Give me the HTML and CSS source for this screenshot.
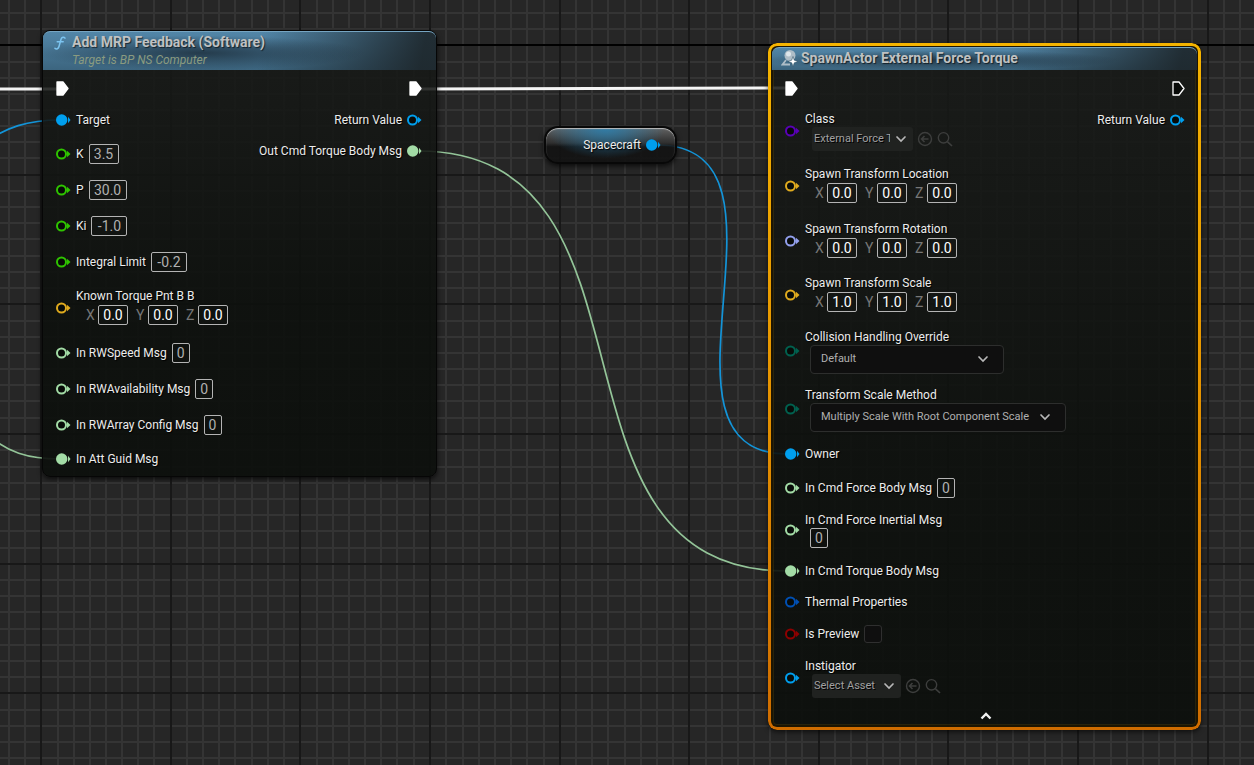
FILE: index.html
```html
<!DOCTYPE html>
<html lang="en">
<head>
<meta charset="utf-8">
<title>Blueprint Graph</title>
<link rel="stylesheet" href="styles.css">
</head>
<body>
<svg class="defs" aria-hidden="true">
  <symbol id="exec" viewBox="0 0 13 15"><path d="M1 1H7l5 6.500L7 14H1Z" stroke-width="1.300" stroke="#fff" stroke-linejoin="round"/></symbol>
  <symbol id="pin" viewBox="0 0 15 12"><circle cx="5.500" cy="6" r="4.500" fill="#080b08" stroke="currentColor" stroke-width="2"/><path d="M11 2.800 14.500 6 11 9.200Z" fill="currentColor"/></symbol>
  <symbol id="pin-on" viewBox="0 0 15 12"><circle cx="5.700" cy="6" r="5.700" fill="currentColor"/><path d="M12 2.800 14.500 6 12 9.200Z" fill="currentColor"/></symbol>
  <symbol id="chev" viewBox="0 0 12 8"><path d="M2 2l4 4 4-4" fill="none" stroke="currentColor" stroke-width="1.700" stroke-linecap="round"/></symbol>
  <symbol id="use" viewBox="0 0 16 16"><circle cx="8" cy="8" r="6.500" fill="none" stroke="currentColor" stroke-width="1.400"/><path d="M11.500 8H4.500M7.500 5l-3 3 3 3" fill="none" stroke="currentColor" stroke-width="1.600"/></symbol>
  <symbol id="find" viewBox="0 0 16 16"><circle cx="6.500" cy="6.800" r="5.200" fill="none" stroke="currentColor" stroke-width="1.400"/><path d="M10.500 10.800 15 15" stroke="currentColor" stroke-width="1.700"/></symbol>
</svg>
<main class="graph">
  <svg class="layer" aria-hidden="true">
    <defs>
      <pattern id="grid" width="648" height="648" patternUnits="userSpaceOnUse" patternTransform="translate(41 45)">
        <g fill="none" stroke-width="2">
          <path id="minor" stroke="#343434" d="M17 0v648M33 0v648M49 0v648M65 0v648M81 0v648M97 0v648M113 0v648M146 0v648M162 0v648M178 0v648M194 0v648M211 0v648M227 0v648M243 0v648M276 0v648M292 0v648M308 0v648M324 0v648M340 0v648M356 0v648M373 0v648M405 0v648M422 0v648M438 0v648M454 0v648M470 0v648M486 0v648M503 0v648M535 0v648M551 0v648M567 0v648M584 0v648M600 0v648M616 0v648M632 0v648"/>
          <use href="#minor" transform="matrix(0 1 1 0 0 0)"/>
          <path id="major" stroke="#181818" d="M0 0v648M130 0v648M259 0v648M389 0v648M519 0v648M648 0v648"/>
          <use href="#major" transform="matrix(0 1 1 0 0 0)"/>
        </g>
      </pattern>
    </defs>
    <rect width="100%" height="100%" fill="url(#grid)"/>
    <path d="M0 45H4000" stroke="#000" stroke-width="2"/>
    <g fill="none">
      <path d="M0 89H60M418 89L788 88" stroke="#f4f4f4" stroke-width="3"/>
      <g stroke="#1394d8" stroke-width="1.700">
        <path d="M-20 147C5 126 30 120 60 120"/>
        <path d="M657 145C814 145 634 454 787 454"/>
      </g>
      <g stroke="#93c498" stroke-width="1.700">
        <path d="M-15 431C5 453 30 459 60 459"/>
        <path d="M418 151C678 151 527 571 787 571"/>
      </g>
    </g>
  </svg>

  <section class="node feedback">
    <header class="head">
      <svg class="fn" viewBox="0 0 12 14"><path d="M11 2.200C10 .6 7.700.8 7.100 3L5 10.500C4.400 12.800 2.500 13.500 1 12.300M3.200 5.800h6" fill="none" stroke="#7cc4f0" stroke-width="1.500" stroke-linecap="round"/></svg>
      <div><h2>Add MRP Feedback (Software)</h2><p>Target is BP NS Computer</p></div>
    </header>
    <div class="body">
      <div class="ins">
        <div class="row h30"><svg class="exec on"><use href="#exec"/></svg></div>
        <div class="row h33 blue"><svg class="pin"><use href="#pin-on"/></svg><span>Target</span></div>
        <div class="row h36 green"><svg class="pin"><use href="#pin"/></svg><label for="k">K</label><input id="k" class="w3" value="3.5"></div>
        <div class="row h36 green"><svg class="pin"><use href="#pin"/></svg><label for="p">P</label><input id="p" class="w4" value="30.0"></div>
        <div class="row h36 green"><svg class="pin"><use href="#pin"/></svg><label for="ki">Ki</label><input id="ki" class="neg" value="-1.0"></div>
        <div class="row h36 green"><svg class="pin"><use href="#pin"/></svg><label for="il">Integral Limit</label><input id="il" class="neg" value="-0.2"></div>
        <div class="row h55 gold"><svg class="pin"><use href="#pin"/></svg>
          <div class="stack lift"><span class="name">Known Torque Pnt B B</span>
            <div class="vec"><label for="tx">X</label><input id="tx" value="0.0"><label for="ty">Y</label><input id="ty" value="0.0"><label for="tz">Z</label><input id="tz" value="0.0"></div></div></div>
        <div class="row h36 mint"><svg class="pin"><use href="#pin"/></svg><label for="rs">In RWSpeed Msg</label><input id="rs" class="w1" value="0"></div>
        <div class="row h36 mint"><svg class="pin"><use href="#pin"/></svg><label for="ra">In RWAvailability Msg</label><input id="ra" class="w1" value="0"></div>
        <div class="row h36 mint"><svg class="pin"><use href="#pin"/></svg><label for="rc">In RWArray Config Msg</label><input id="rc" class="w1" value="0"></div>
        <div class="row h32 mint"><svg class="pin"><use href="#pin-on"/></svg><span>In Att Guid Msg</span></div>
      </div>
      <div class="outs">
        <div class="row h30"><svg class="exec on"><use href="#exec"/></svg></div>
        <div class="row h33 blue"><span>Return Value</span><svg class="pin"><use href="#pin"/></svg></div>
        <div class="row h30 mint"><span>Out Cmd Torque Body Msg</span><svg class="pin"><use href="#pin-on"/></svg></div>
      </div>
    </div>
  </section>

  <section class="variable blue"><span>Spacecraft</span><svg class="pin"><use href="#pin-on"/></svg></section>

  <section class="node spawn">
    <header class="head">
      <svg class="actor" viewBox="0 0 18 18"><circle cx="9" cy="6.500" r="5.500" fill="#aebdc7"/><circle cx="7.500" cy="5" r="2.500" fill="#dde6eb"/><path d="M5 11 1.500 15.500H9" fill="none" stroke="#aebdc7" stroke-width="1.800"/><path d="M12 7.500l1.300 3.700L17 12.500l-3.700 1.300L12 17.500l-1.300-3.700L7 12.500l3.700-1.300Z" fill="#fff" stroke="#33556a" stroke-width=".6"/></svg>
      <h2>SpawnActor External Force Torque</h2>
    </header>
    <div class="body">
      <div class="ins">
        <div class="row h30"><svg class="exec on"><use href="#exec"/></svg></div>
        <div class="row h56 purple"><svg class="pin"><use href="#pin"/></svg>
          <div class="stack tight"><label class="name" for="cl">Class</label>
            <div class="asset"><span class="pick class"><select id="cl"><option>External Force Torque</option></select><svg><use href="#chev"/></svg></span><button aria-label="Use selected"><svg><use href="#use"/></svg></button><button aria-label="Browse"><svg><use href="#find"/></svg></button></div></div></div>
        <div class="row h54 gold"><svg class="pin"><use href="#pin"/></svg>
          <div class="stack lift"><span class="name">Spawn Transform Location</span>
            <div class="vec"><label for="lx">X</label><input id="lx" value="0.0"><label for="ly">Y</label><input id="ly" value="0.0"><label for="lz">Z</label><input id="lz" value="0.0"></div></div></div>
        <div class="row h55 lilac"><svg class="pin"><use href="#pin"/></svg>
          <div class="stack lift"><span class="name">Spawn Transform Rotation</span>
            <div class="vec"><label for="rx">X</label><input id="rx" value="0.0"><label for="ry">Y</label><input id="ry" value="0.0"><label for="rz">Z</label><input id="rz" value="0.0"></div></div></div>
        <div class="row h54 gold"><svg class="pin"><use href="#pin"/></svg>
          <div class="stack lift"><span class="name">Spawn Transform Scale</span>
            <div class="vec"><label for="sx">X</label><input id="sx" value="1.0"><label for="sy">Y</label><input id="sy" value="1.0"><label for="sz">Z</label><input id="sz" value="1.0"></div></div></div>
        <div class="row h58 teal"><svg class="pin"><use href="#pin"/></svg>
          <div class="stack tight"><label class="name" for="co">Collision Handling Override</label>
            <span class="combo short"><select id="co"><option>Default</option></select><svg><use href="#chev"/></svg></span></div></div>
        <div class="row h58 teal"><svg class="pin"><use href="#pin"/></svg>
          <div class="stack tight"><label class="name" for="sm">Transform Scale Method</label>
            <span class="combo long"><select id="sm"><option>Multiply Scale With Root Component Scale</option></select><svg><use href="#chev"/></svg></span></div></div>
        <div class="row h32 blue"><svg class="pin"><use href="#pin-on"/></svg><span>Owner</span></div>
        <div class="row h36 mint"><svg class="pin"><use href="#pin"/></svg><label for="fb">In Cmd Force Body Msg</label><input id="fb" class="w1" value="0"></div>
        <div class="row h48 mint"><svg class="pin"><use href="#pin"/></svg>
          <div class="stack tight"><label class="name" for="fi">In Cmd Force Inertial Msg</label><input id="fi" class="w1 under" value="0"></div></div>
        <div class="row h33 mint"><svg class="pin"><use href="#pin-on"/></svg><span>In Cmd Torque Body Msg</span></div>
        <div class="row h30 navy"><svg class="pin"><use href="#pin"/></svg><span>Thermal Properties</span></div>
        <div class="row h33 red"><svg class="pin"><use href="#pin"/></svg><label for="ip">Is Preview</label><input id="ip" type="checkbox"></div>
        <div class="row h55 blue"><svg class="pin"><use href="#pin"/></svg>
          <div class="stack tight"><label class="name" for="in">Instigator</label>
            <div class="asset"><span class="pick inst"><select id="in"><option>Select Asset</option></select><svg><use href="#chev"/></svg></span><button aria-label="Use selected"><svg><use href="#use"/></svg></button><button aria-label="Browse"><svg><use href="#find"/></svg></button></div></div></div>
      </div>
      <div class="outs">
        <div class="row h30"><svg class="exec"><use href="#exec"/></svg></div>
        <div class="row h33 blue"><span>Return Value</span><svg class="pin"><use href="#pin"/></svg></div>
      </div>
    </div>
    <button class="fold" aria-label="Collapse"><svg viewBox="0 0 12 8"><path d="M1.500 6.500 6 2l4.500 4.500" fill="none" stroke="#f2f2f2" stroke-width="2.400"/></svg></button>
  </section>
</main>
</body>
</html>
```
FILE: styles.css
```css
* { box-sizing: border-box; }
body { margin: 0; background: #262626; color: #ececec; font: 12px/16px Roboto, "Liberation Sans", sans-serif; }
.defs { position: absolute; width: 0; height: 0; }
.graph { position: relative; min-height: 100vh; overflow: hidden; }
.layer { position: absolute; inset: 0; width: 100%; height: 100%; }
h2, p { margin: 0; }
svg { display: block; flex: none; }
input, select, button { font: inherit; color: inherit; margin: 0; padding: 0; border: 0; background: none; appearance: none; }

.node { position: absolute; background: linear-gradient(rgba(24, 26, 24, .87), rgba(13, 16, 13, .9) 60%, rgba(12, 15, 12, .92)); }
.feedback { left: 42px; top: 30px; width: 395px; padding-bottom: 1px; border: 1px solid #060606; border-radius: 8px; box-shadow: 0 2px 5px rgba(0, 0, 0, .7); }
.spawn { left: 768px; top: 43px; width: 433px; padding: 4px 4px 2px; border-radius: 9px; box-shadow: 0 2px 5px rgba(0, 0, 0, .6), inset 0 0 0 5px rgba(25, 18, 0, .8), inset 0 0 0 6px rgba(90, 70, 10, .35); }
.spawn::before { content: ""; position: absolute; inset: 0; padding: 3px; border-radius: 9px; background: linear-gradient(#f5b400, #e69400 50%, #cf6c00); mask: linear-gradient(#000 0 0) content-box exclude, linear-gradient(#000 0 0); pointer-events: none; }

.head { display: flex; color: #bfc1c2; border-radius: 7px 7px 0 0; border-top: 1px solid #76a5c2;
  background: radial-gradient(ellipse 42% 46% at 40% 55%, rgba(25, 40, 52, .75), transparent), linear-gradient(100deg, transparent 55%, rgba(28, 36, 40, .9) 96%), linear-gradient(#5286a8, #3c657f); }
h2 { font-size: 14px; line-height: 20px; font-weight: 700; text-shadow: 1px 1px 1px rgba(0, 0, 0, .6); }
.head p { font-style: italic; color: #8a9b80; }
.feedback .head { height: 39px; padding-left: 11px; gap: 6px; }
.fn { width: 12px; height: 14px; margin-top: 4px; }
.spawn .head { height: 23px; padding-left: 9px; gap: 2px; }
.actor { width: 18px; height: 18px; margin-top: 1px; }

.body { display: flex; justify-content: space-between; padding: 3px 14px 0 13px; }
.spawn .body { padding-right: 12px; }
.ins, .outs { display: flex; flex-direction: column; }
.outs { align-items: flex-end; }
.row { display: flex; align-items: center; gap: 5px; white-space: nowrap; }
.h30 { height: 30px; } .h32 { height: 32px; } .h33 { height: 33px; } .h36 { height: 36px; }
.h48 { height: 48px; } .h54 { height: 54px; } .h55 { height: 55px; } .h56 { height: 56px; } .h58 { height: 58px; }
.exec { width: 13px; height: 15px; fill: #090b09; }
.exec.on { fill: #fff; }
.pin { width: 15px; height: 12px; }
.row > span, .row > label, .name { color: #ececec; text-shadow: 1px 1px 1px #000; }
.blue { color: #009fee; } .green { color: #2fc400; } .mint { color: #a3dca6; } .gold { color: #e0ab1e; }
.purple { color: #5a00b8; } .lilac { color: #93a0ee; } .teal { color: #00614f; } .navy { color: #0050b4; } .red { color: #8e0000; }

.row input { width: 30px; height: 20px; border: 1px solid #b4b4b4; border-radius: 2px; color: #b0b0b0; font-size: 14px; line-height: 18px; text-align: center; }
.row input.w1 { width: 18px; }
.row input.w4 { width: 38px; }
.row input.neg { width: 36px; }
.row input[type="checkbox"] { width: 18px; height: 18px; border-color: #2f2f2f; border-radius: 3px; background: #0f0f0f; }
.row input.under { margin-left: 5px; }

.stack { display: flex; flex-direction: column; align-items: flex-start; }
.stack.lift { padding-bottom: 4px; }
.name { line-height: 18px; }
.tight .name { line-height: 16px; }
.vec { display: flex; align-items: center; padding-left: 10px; color: #777; font-size: 14px; }
.vec label { width: 12px; }
.vec input { margin-right: 8px; color: #fff; }

.asset { display: flex; align-items: center; gap: 4px; padding-left: 7px; color: #3d3e3d; }
.asset button svg { width: 16px; height: 16px; }
.pick, .combo { position: relative; display: block; color: #b0b0b0; }
.pick select, .combo select { width: 100%; height: 100%; }
.pick { height: 24px; border-radius: 3px; background: #202220; color: #a0a0a0; }
.pick select { padding: 0 21px 0 2px; text-shadow: 1px 1px 0 #000; font-size: 11px; }
.pick svg, .combo svg { position: absolute; top: 50%; width: 12px; height: 8px; margin-top: -4px; pointer-events: none; color: #b8b8b8; }
.pick svg { right: 6px; }
.class { width: 101px; }
.class select { padding-right: 23px; }
.inst { width: 89px; }
.combo { height: 29px; margin-left: 5px; border: 1px solid #2d2e2d; border-radius: 4px; background: #0f0f0f; }
.combo select { padding: 0 26px 0 10px; font-size: 11px; }
.combo svg { right: 14px; }
.short { width: 194px; }
.long { width: 256px; }
.fold { display: block; margin: 0 auto; padding: 7px 5px 8px 7px; }
.fold svg { width: 12px; height: 8px; }

.variable { position: absolute; left: 544px; top: 126px; width: 133px; height: 38px; padding-right: 14px; display: flex; justify-content: flex-end; align-items: center; gap: 5px; border: 2px solid #080808; border-radius: 14px;
  background: radial-gradient(ellipse 46% 90% at 46% 0, rgba(40, 130, 180, .85), transparent), linear-gradient(rgba(105, 105, 105, .9), rgba(45, 45, 45, .9) 45%, rgba(18, 18, 18, .9) 55%, rgba(18, 18, 18, .9));
  box-shadow: 0 2px 5px rgba(0, 0, 0, .7), inset 0 1px 1px #bbb; }
.variable span { color: #ececec; text-shadow: 1px 1px 1px #000; }
```
